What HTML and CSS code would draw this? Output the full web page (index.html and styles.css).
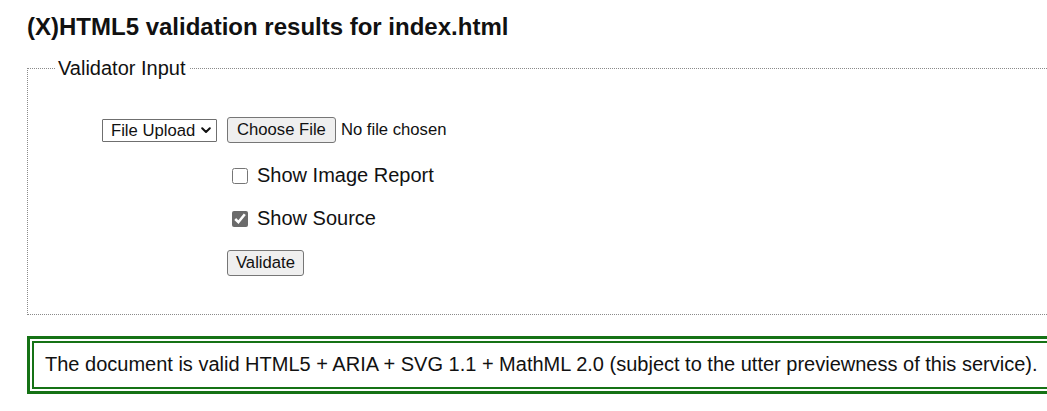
FILE: index.html
```html
<!DOCTYPE html>
<html lang="en">
<head>
<meta charset="utf-8">
<title>(X)HTML5 validation results for index.html</title>
<link rel="stylesheet" href="styles.css">
</head>
<body>
<main class="page">
  <h2 class="title">(X)HTML5 validation results for index.html</h2>
  <form class="validator" action="#">
    <fieldset class="input-set">
      <legend class="input-legend">Validator Input</legend>
      <div class="form-grid">
        <div class="cell-label">
          <span class="select-wrap">
            <select class="mode-select" name="mode">
              <option>File Upload</option>
            </select>
            <svg class="select-arrow" width="10" height="7" viewBox="0 0 10 7" aria-hidden="true"><path d="M1.2 1.2 L5 5 L8.8 1.2" fill="none" stroke="#111" stroke-width="2" stroke-linecap="round" stroke-linejoin="round"/></svg>
          </span>
        </div>
        <div class="cell-field">
          <input type="file" class="file-input" name="file">
        </div>
        <div class="cell-field col-2 row-first-check">
          <label class="check-label"><input type="checkbox" class="check" name="showimagereport">Show Image Report</label>
        </div>
        <div class="cell-field col-2">
          <label class="check-label"><input type="checkbox" class="check" name="showsource" checked>Show Source</label>
        </div>
        <div class="cell-field col-2">
          <button type="button" class="btn">Validate</button>
        </div>
      </div>
    </fieldset>
  </form>
  <div class="result">
    <p class="result-text">The document is valid HTML5 + ARIA + SVG 1.1 + MathML 2.0 (subject to the utter previewness of this service).</p>
  </div>
</main>
</body>
</html>
```

FILE: styles.css
```css
html, body {
  margin: 0;
  padding: 0;
  background: #ffffff;
  overflow: hidden;
}

body {
  font-family: "Liberation Sans", Arial, sans-serif;
  color: #111111;
}

.page {
  width: 1060px;
  padding-left: 27px;
}

.title {
  margin: 13px 0 16px 0;
  font-size: 24px;
  line-height: 28px;
  font-weight: bold;
  color: #111111;
}

.validator {
  margin: 0;
}

.input-set {
  margin: 0;
  padding: 37px 0 38px 0;
  border: 1px dotted #8a8a8a;
  min-width: 0;
}

.input-legend {
  margin-left: 27px;
  padding: 0 3px;
  font-size: 20px;
  line-height: 23px;
  color: #111111;
}

.form-grid {
  display: grid;
  grid-template-columns: 189px 1fr;
  column-gap: 10px;
  row-gap: 20px;
}

.cell-label {
  display: flex;
  justify-content: flex-end;
  align-items: center;
}

.cell-field {
  display: flex;
  align-items: center;
}

.col-2 {
  grid-column: 2;
}

.row-first-check {
  margin-top: 1px;
}

.select-wrap {
  position: relative;
  display: inline-flex;
}

.mode-select {
  box-sizing: border-box;
  width: 115px;
  height: 23px;
  margin: 0;
  padding: 0 0 0 8px;
  font-family: "Liberation Sans", Arial, sans-serif;
  font-size: 16.67px;
  color: #111111;
  background-color: #ffffff;
  border: 1px solid #6f6f6f;
  border-radius: 1px;
  appearance: none;
  -webkit-appearance: none;
}

.select-arrow {
  position: absolute;
  right: 6px;
  top: 8px;
  pointer-events: none;
}

.file-input {
  margin: 0;
  font-family: "Liberation Sans", Arial, sans-serif;
  font-size: 16.67px;
  color: #111111;
}

.file-input::file-selector-button {
  box-sizing: border-box;
  height: 26px;
  margin: 0 5px 0 0;
  padding: 0 9px;
  font-family: "Liberation Sans", Arial, sans-serif;
  font-size: 16.67px;
  color: #111111;
  background: #efefef;
  border: 1px solid #767676;
  border-radius: 3px;
}

.check-label {
  display: flex;
  align-items: center;
  height: 23px;
  font-size: 20px;
  line-height: 23px;
  color: #111111;
}

.check {
  width: 16px;
  height: 16px;
  margin: 0 9px 0 5px;
  accent-color: #6b6b6b;
}

.btn {
  box-sizing: border-box;
  height: 26px;
  margin: 0;
  padding: 0 8px;
  font-family: "Liberation Sans", Arial, sans-serif;
  font-size: 16.67px;
  color: #111111;
  background: #efefef;
  border: 1px solid #767676;
  border-radius: 3px;
}

.result {
  margin-top: 21px;
  padding: 2px;
  border: 3px solid #157215;
}

.result-text {
  margin: 0;
  padding: 10px 11px 11px 11px;
  border: 2px solid #157215;
  font-size: 20px;
  line-height: 23px;
  color: #111111;
}
```
